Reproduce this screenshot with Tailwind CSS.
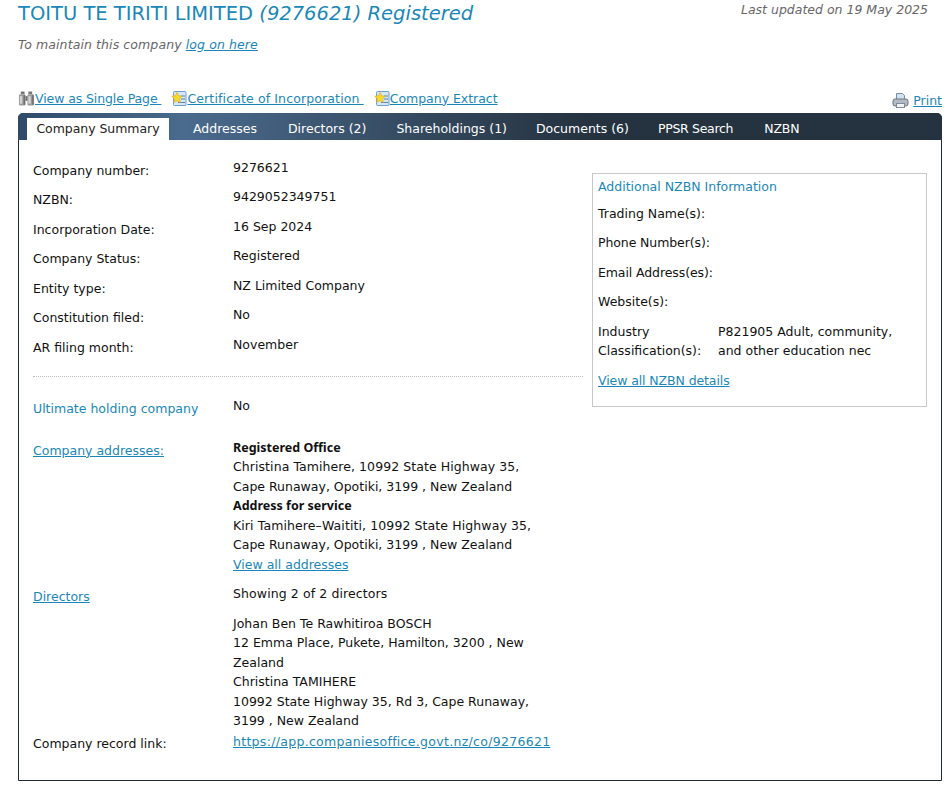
<!DOCTYPE html>
<html lang="en">
<head>
  <meta charset="UTF-8" />
  <title>TOITU TE TIRITI LIMITED</title>
  <script src="https://cdn.jsdelivr.net/npm/@tailwindcss/browser@4"></script>
</head>
<body class="bg-white font-['DejaVu_Sans',sans-serif] text-[12.5px] leading-[19.5px] text-[#111]">
  <div class="w-[950px] h-[793px] overflow-hidden pl-[18px] pr-[8px]">
    <!-- Heading -->
    <div class="flex justify-between items-start h-[34px]">
      <h1 class="text-[19.5px] leading-[26px] pt-[1px] text-[#1a87b8]">TOITU TE TIRITI LIMITED <em>(9276621) Registered</em></h1>
      <p class="italic text-[#666] pr-[14px]">Last updated on 19 May 2025</p>
    </div>
    <p class="italic text-[#666] h-[45px] pt-[1px] tracking-[0.1px]">To maintain this company <a href="#" class="text-[#1a87b8] underline">log on here</a></p>

    <!-- Toolbar -->
    <div class="flex justify-between items-end h-[34px]">
      <div class="flex gap-[10px] pb-[5px]">
        <a href="#" class="flex items-center text-[#1a87b8] underline tracking-[-0.1px]">
          <svg class="w-[17px] h-[17px]" viewBox="0 0 18 17"><path d="M3 1h4v3H3zM11 1h4v3h-4z" fill="#777"/><rect x="1" y="4" width="7" height="12" rx="1.500" fill="#9a9a9a"/><rect x="10" y="4" width="7" height="12" rx="1.500" fill="#9a9a9a"/><rect x="8" y="6" width="2" height="5" fill="#6a6a6a"/><rect x="2" y="6" width="2.500" height="8" fill="#d4d4d4"/><rect x="11" y="6" width="2.500" height="8" fill="#d4d4d4"/><rect x="6" y="5" width="1.500" height="10" fill="#6e6e6e"/><rect x="15" y="5" width="1.500" height="10" fill="#6e6e6e"/></svg>
          <span>View as Single Page&nbsp;</span>
        </a>
        <a href="#" class="flex items-center text-[#1a87b8] underline tracking-[0.13px]">
          <svg class="w-[16px] h-[17px]" viewBox="0 0 16 17"><rect x="2.500" y="1.500" width="12.500" height="14" rx="1" fill="#d6e6f7" stroke="#6f9fd0"/><path d="M10 6h4M10 9h4M7 12.500h7" stroke="#5f83ad"/><path d="M6 2.500l1.700 3.300 3.600.5-2.600 2.500.6 3.600-3.300-1.700-3.300 1.700.6-3.600L.7 6.300l3.600-.5z" fill="#f7d92e" stroke="#d9a91c" stroke-width=".6"/></svg>
          <span>Certificate of Incorporation&nbsp;</span>
        </a>
        <a href="#" class="flex items-center text-[#1a87b8] underline tracking-[-0.02px]">
          <svg class="w-[16px] h-[17px]" viewBox="0 0 16 17"><rect x="2.500" y="1.500" width="12.500" height="14" rx="1" fill="#d6e6f7" stroke="#6f9fd0"/><path d="M10 6h4M10 9h4M7 12.500h7" stroke="#5f83ad"/><path d="M6 2.500l1.700 3.300 3.600.5-2.600 2.500.6 3.600-3.300-1.700-3.300 1.700.6-3.600L.7 6.300l3.600-.5z" fill="#f7d92e" stroke="#d9a91c" stroke-width=".6"/></svg>
          <span>Company Extract</span>
        </a>
      </div>
      <a href="#" class="flex items-center gap-[4px] pb-[3px] text-[#1a87b8] underline">
        <svg class="w-[17px] h-[17px]" viewBox="0 0 17 17"><path d="M4.500 8V1.500h6l2 2V8z" fill="#cfe2f5" stroke="#7f8b99"/><rect x="1" y="7" width="15" height="7" rx="2" fill="#b4bac1" stroke="#6b7480"/><rect x="4.500" y="11.500" width="8" height="4" fill="#f2f2f2" stroke="#7f8b99"/></svg>
        <span>Print</span>
      </a>
    </div>

    <!-- Tab panel -->
    <div class="w-[924px] h-[668px] border border-[#1f2a38] rounded-t-[5px]">
      <ul class="flex items-end h-[27px] pl-[9px] -mx-[1px] -mt-[1px] rounded-t-[5px] bg-gradient-to-r from-[#2f4b69] via-[#4a6b8e] via-[18%] to-[#25323f] to-[62%] text-white">
        <li class="w-[142px] h-[22px] bg-white text-[#222] text-center leading-[21px] tracking-[-0.05px]">Company Summary</li>
        <li class="ml-[24px] h-[22px] leading-[21px]">Addresses</li>
        <li class="ml-[31px] h-[22px] leading-[21px]">Directors (2)</li>
        <li class="ml-[30px] h-[22px] leading-[21px]">Shareholdings (1)</li>
        <li class="ml-[29px] h-[22px] leading-[21px]">Documents (6)</li>
        <li class="ml-[29px] h-[22px] leading-[21px] tracking-[-0.3px]">PPSR Search</li>
        <li class="ml-[31px] h-[22px] leading-[21px] tracking-[-0.2px]">NZBN</li>
      </ul>

      <div class="flex pl-[14px] pt-[17.5px]">
        <!-- Left column -->
        <div class="w-[550px]">
          <dl class="grid grid-cols-[200px_1fr] auto-rows-[29.5px]">
            <dt class="pt-[3px]">Company number:</dt><dd>9276621</dd>
            <dt class="pt-[3px]">NZBN:</dt><dd>9429052349751</dd>
            <dt class="pt-[3px]">Incorporation Date:</dt><dd>16 Sep 2024</dd>
            <dt class="pt-[3px]">Company Status:</dt><dd>Registered</dd>
            <dt class="pt-[3px]">Entity type:</dt><dd>NZ Limited Company</dd>
            <dt class="pt-[3px]">Constitution filed:</dt><dd>No</dd>
            <dt class="pt-[3px]">AR filing month:</dt><dd>November</dd>
          </dl>
          <hr class="border-0 border-t border-dotted border-[#bbb] mt-[11.5px] mb-[19.5px]" />
          <div class="grid grid-cols-[200px_1fr]">
            <div class="pt-[3px] text-[#1a87b8] h-[41.5px]">Ultimate holding company</div>
            <div>No</div>

            <div class="pt-[3px]"><a href="#" class="text-[#1a87b8] underline">Company addresses:</a></div>
            <div class="h-[146px]">
              <p class="font-bold font-['Noto_Sans',sans-serif] text-[12.5px]">Registered Office</p>
              <p class="tracking-[0.07px]">Christina Tamihere, 10992 State Highway 35,</p>
              <p>Cape Runaway, Opotiki, 3199 , New Zealand</p>
              <p class="font-bold font-['Noto_Sans',sans-serif] text-[12.5px]">Address for service</p>
              <p class="tracking-[0.1px]">Kiri Tamihere–Waititi, 10992 State Highway 35,</p>
              <p>Cape Runaway, Opotiki, 3199 , New Zealand</p>
              <a href="#" class="text-[#1a87b8] underline">View all addresses</a>
            </div>

            <div class="pt-[3px]"><a href="#" class="text-[#1a87b8] underline">Directors</a></div>
            <div>
              <p class="mb-[10.5px] tracking-[0.1px]">Showing 2 of 2 directors</p>
              <p class="w-[310px]">Johan Ben Te Rawhitiroa BOSCH<br />12 Emma Place, Pukete, Hamilton, 3200 , New Zealand<br />Christina TAMIHERE<br />10992 State Highway 35, Rd 3, Cape Runaway, 3199 , New Zealand</p>
            </div>

            <div class="pt-[3px]">Company record link:</div>
            <div class="pt-[1px]"><a href="#" class="text-[#1a87b8] underline tracking-[0.3px]">https://app.companiesoffice.govt.nz/co/9276621</a></div>
          </div>
        </div>

        <!-- NZBN box -->
        <aside class="w-[335px] h-[234px] mt-[15.5px] ml-[9px] border border-[#c8c8c8] px-[5px] pt-[3px]">
          <h2 class="text-[#1a87b8] mb-[7px]">Additional NZBN Information</h2>
          <p class="mb-[10px]">Trading Name(s):</p>
          <p class="mb-[10px] tracking-[-0.1px]">Phone Number(s):</p>
          <p class="mb-[10px] tracking-[-0.1px]">Email Address(es):</p>
          <p class="mb-[10px]">Website(s):</p>
          <div class="grid grid-cols-[120px_1fr] mb-[10px]">
            <p>Industry Classification(s):</p>
            <p>P821905 Adult, community,<br />and other education nec</p>
          </div>
          <a href="#" class="text-[#1a87b8] underline tracking-[-0.1px]">View all NZBN details</a>
        </aside>
      </div>
    </div>
  </div>
</body>
</html>
